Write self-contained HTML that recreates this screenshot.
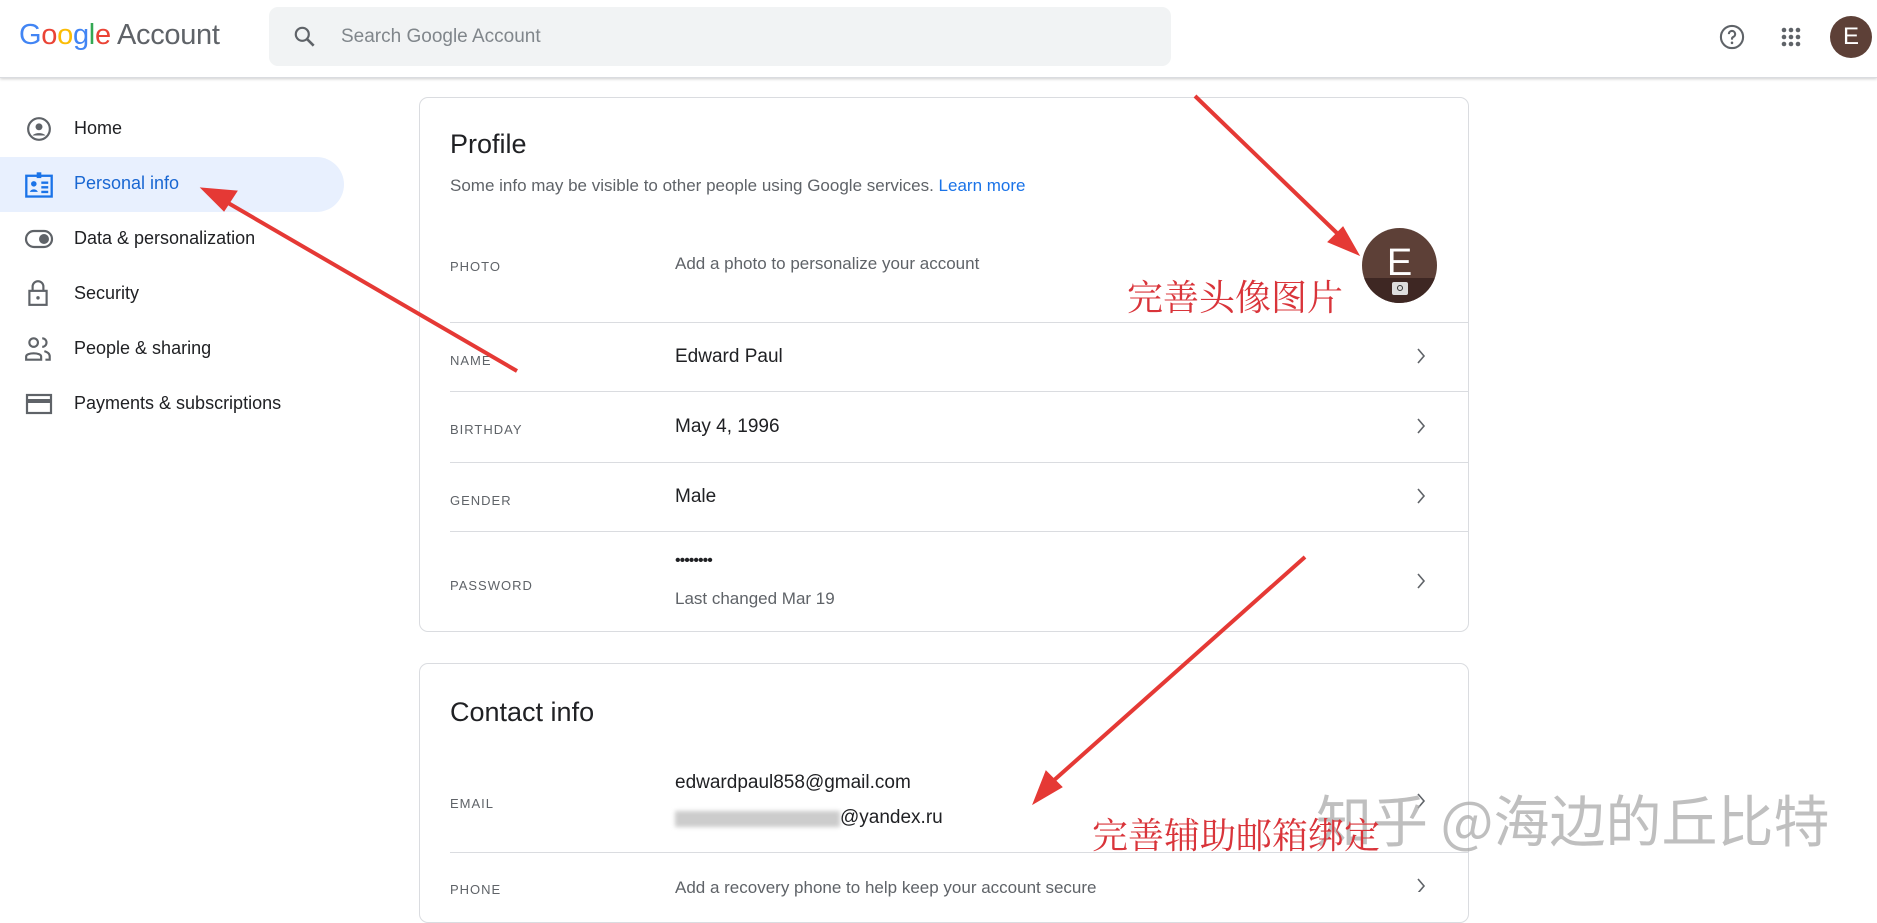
<!DOCTYPE html>
<html><head><meta charset="utf-8"><style>
*{margin:0;padding:0;box-sizing:border-box}
body{width:1877px;height:892px;overflow:hidden;background:#fff;font-family:"Liberation Sans",Arial,sans-serif;color:#202124;position:relative}
.a{position:absolute;white-space:nowrap}
.hdr{position:absolute;left:0;top:0;width:1877px;height:78px;border-bottom:1px solid #dadce0;box-shadow:0 1px 3px rgba(0,0,0,.2);background:#fff}
.nav{font-size:18px;color:#202124;left:74px}
.card{position:absolute;border:1px solid #dadce0;border-radius:9px;background:#fff}
.lbl{font-size:13px;letter-spacing:1px;color:#5f6368;left:450px}
.val{font-size:19px;color:#202124;left:675px}
.hr{position:absolute;left:450px;width:1019px;height:1px;background:#dadce0}
.red{color:#d9343a;font-family:"Noto Serif CJK SC","Noto Sans CJK SC",serif;font-size:36px}
</style></head><body>
<div class="hdr"></div>
<div class="a" style="left:19px;top:19px;font-size:29px;letter-spacing:-.3px"><span style="color:#4285f4">G</span><span style="color:#ea4335">o</span><span style="color:#fbbc05">o</span><span style="color:#4285f4">g</span><span style="color:#34a853">l</span><span style="color:#ea4335">e</span><span style="color:#5f6368"> Account</span></div>
<div style="position:absolute;left:269px;top:7px;width:902px;height:59px;background:#f1f3f4;border-radius:9px"></div>
<svg class="a" style="left:292px;top:24px" width="26" height="26" viewBox="0 0 24 24"><circle cx="9.5" cy="9.5" r="6" fill="none" stroke="#5f6368" stroke-width="2"/><path d="M14 14l6 6" stroke="#5f6368" stroke-width="2.4"/></svg>
<div class="a" style="left:341px;top:26px;font-size:19px;color:#80868b">Search Google Account</div>
<svg class="a" style="left:1718px;top:23px" width="28" height="28" viewBox="0 0 24 24"><circle cx="12" cy="12" r="9.5" fill="none" stroke="#5f6368" stroke-width="1.8"/><path d="M9.3 9.5a2.7 2.7 0 1 1 3.7 2.5c-.7.3-1 .8-1 1.6v.6" fill="none" stroke="#5f6368" stroke-width="1.8"/><circle cx="12" cy="17" r="1.1" fill="#5f6368"/></svg>
<svg class="a" style="left:1780px;top:26px" width="22" height="22" viewBox="0 0 22 22" fill="#5f6368"><circle cx="4" cy="4" r="2.3"/><circle cx="11" cy="4" r="2.3"/><circle cx="18" cy="4" r="2.3"/><circle cx="4" cy="11" r="2.3"/><circle cx="11" cy="11" r="2.3"/><circle cx="18" cy="11" r="2.3"/><circle cx="4" cy="18" r="2.3"/><circle cx="11" cy="18" r="2.3"/><circle cx="18" cy="18" r="2.3"/></svg>
<div class="a" style="left:1830px;top:16px;width:42px;height:42px;border-radius:50%;background:#5d4037;color:#fff;font-size:24px;text-align:center;line-height:42px">E</div>

<div style="position:absolute;left:0;top:157px;width:344px;height:55px;background:#e8f0fe;border-radius:0 28px 28px 0"></div>
<svg class="a" style="left:26px;top:116px" width="26" height="26" viewBox="0 0 24 24"><circle cx="12" cy="12" r="10" fill="none" stroke="#5f6368" stroke-width="2"/><circle cx="12" cy="10" r="3.2" fill="#5f6368"/><path d="M6 18c2-3 10-3 12 0" fill="#5f6368"/></svg>
<div class="a nav" style="top:118px">Home</div>
<svg class="a" style="left:24px;top:171px" width="30" height="28" viewBox="0 0 26 24"><rect x="2" y="4" width="22" height="18" fill="none" stroke="#1a73e8" stroke-width="2"/><rect x="11" y="1" width="4" height="5" fill="#1a73e8"/><circle cx="8.5" cy="11" r="2.4" fill="#1a73e8"/><path d="M5 18c1-3 6-3 7 0z" fill="#1a73e8"/><path d="M15 10h6M15 14h6M15 18h6" stroke="#1a73e8" stroke-width="2"/></svg>
<div class="a nav" style="top:173px;color:#1967d2">Personal info</div>
<svg class="a" style="left:24px;top:228px" width="30" height="22" viewBox="0 0 30 22"><rect x="2" y="3" width="26" height="16" rx="8" fill="none" stroke="#5f6368" stroke-width="2.2"/><circle cx="20" cy="11" r="5" fill="#5f6368"/></svg>
<div class="a nav" style="top:228px">Data &amp; personalization</div>
<svg class="a" style="left:27px;top:279px" width="22" height="28" viewBox="0 0 20 26"><path d="M5 11V7a5 5 0 0 1 10 0v4" fill="none" stroke="#5f6368" stroke-width="2"/><rect x="2" y="11" width="16" height="13" fill="none" stroke="#5f6368" stroke-width="2"/><circle cx="10" cy="17.5" r="1.6" fill="#5f6368"/></svg>
<div class="a nav" style="top:283px">Security</div>
<svg class="a" style="left:24px;top:336px" width="30" height="26" viewBox="0 0 28 24"><circle cx="9" cy="6" r="4" fill="none" stroke="#5f6368" stroke-width="2"/><path d="M2 22v-3c0-4 14-4 14 0v3z" fill="none" stroke="#5f6368" stroke-width="2"/><path d="M17 2a4 4 0 0 1 0 8M19 14c3 1 5 2 5 5v3h-4" fill="none" stroke="#5f6368" stroke-width="2"/></svg>
<div class="a nav" style="top:338px">People &amp; sharing</div>
<svg class="a" style="left:25px;top:393px" width="28" height="22" viewBox="0 0 28 22"><rect x="2" y="2" width="24" height="18" fill="none" stroke="#5f6368" stroke-width="2.2"/><rect x="2" y="6" width="24" height="4" fill="#5f6368"/></svg>
<div class="a nav" style="top:393px">Payments &amp; subscriptions</div>

<div class="card" style="left:419px;top:97px;width:1050px;height:535px"></div>
<div class="a" style="left:450px;top:129px;font-size:27px">Profile</div>
<div class="a" style="left:450px;top:176px;font-size:17px;color:#5f6368">Some info may be visible to other people using Google services. <span style="color:#1a73e8">Learn more</span></div>
<div class="a lbl" style="top:259px">PHOTO</div>
<div class="a" style="left:675px;top:254px;font-size:17px;color:#5f6368">Add a photo to personalize your account</div>
<div class="a" style="left:1362px;top:228px;width:75px;height:75px;border-radius:50%;background:#5d4037;overflow:hidden"><div style="position:absolute;left:0;top:0;width:75px;text-align:center;color:#fff;font-size:38px;line-height:70px">E</div><div style="position:absolute;left:0;top:50px;width:75px;height:25px;background:#3e2723"></div><div style="position:absolute;left:30px;top:54px;width:16px;height:13px;background:#ddd;border-radius:2px"></div><div style="position:absolute;left:35px;top:57px;width:6px;height:6px;border-radius:50%;border:1.5px solid #333"></div></div>
<div class="hr" style="top:322px"></div>
<div class="a lbl" style="top:353px">NAME</div><div class="a val" style="top:346px">Edward Paul</div>
<div class="hr" style="top:391px"></div>
<div class="a lbl" style="top:422px">BIRTHDAY</div><div class="a val" style="top:416px">May 4, 1996</div>
<div class="hr" style="top:462px"></div>
<div class="a lbl" style="top:493px">GENDER</div><div class="a val" style="top:486px">Male</div>
<div class="hr" style="top:531px"></div>
<div class="a lbl" style="top:578px">PASSWORD</div>
<div class="a val" style="top:552px;font-size:16px;letter-spacing:-1px">••••••••</div>
<div class="a" style="left:675px;top:589px;font-size:17px;color:#5f6368">Last changed Mar 19</div>

<div class="card" style="left:419px;top:663px;width:1050px;height:260px"></div>
<div class="a" style="left:450px;top:697px;font-size:27px">Contact info</div>
<div class="a lbl" style="top:796px">EMAIL</div>
<div class="a" style="left:675px;top:772px;font-size:19px">edwardpaul858@gmail.com</div>
<div class="a" style="left:675px;top:811px;width:165px;height:16px;background:#ccc;filter:blur(2px)"></div>
<div class="a" style="left:840px;top:807px;font-size:19px">@yandex.ru</div>
<div class="hr" style="top:852px"></div>
<div class="a lbl" style="top:882px">PHONE</div>
<div class="a" style="left:675px;top:878px;font-size:17px;color:#5f6368">Add a recovery phone to help keep your account secure</div>

<svg class="a" style="left:0;top:0" width="1877" height="892" viewBox="0 0 1877 892">
<g fill="none" stroke="#5f6368" stroke-width="1.6"><path d="M1418 349l6 7-6 7"/><path d="M1418 419l6 7-6 7"/><path d="M1418 489l6 7-6 7"/><path d="M1418 574l6 7-6 7"/><path d="M1418 794l6 7-6 7"/><path d="M1418 879l6 7-6 7"/></g>
<g fill="#e53935" stroke="#e53935"><path d="M517 371L223 200" stroke-width="4"/><path d="M201 188l36 3-13 20z"/>
<path d="M1195 96L1340 236" stroke-width="4"/><path d="M1359 255l-31-13 15-15z"/>
<path d="M1305 557L1052 782" stroke-width="4"/><path d="M1033 804l13-33 16 16z"/></g>
</svg>
<div class="a red" style="left:1127px;top:270px">完善头像图片</div>
<div class="a" style="left:1316px;top:778px;font-size:56px;color:rgba(170,170,170,.75);font-family:'Noto Sans CJK SC',sans-serif">知乎 @海边的丘比特</div>
<div class="a red" style="left:1092px;top:808px">完善辅助邮箱绑定</div>
</body></html>
